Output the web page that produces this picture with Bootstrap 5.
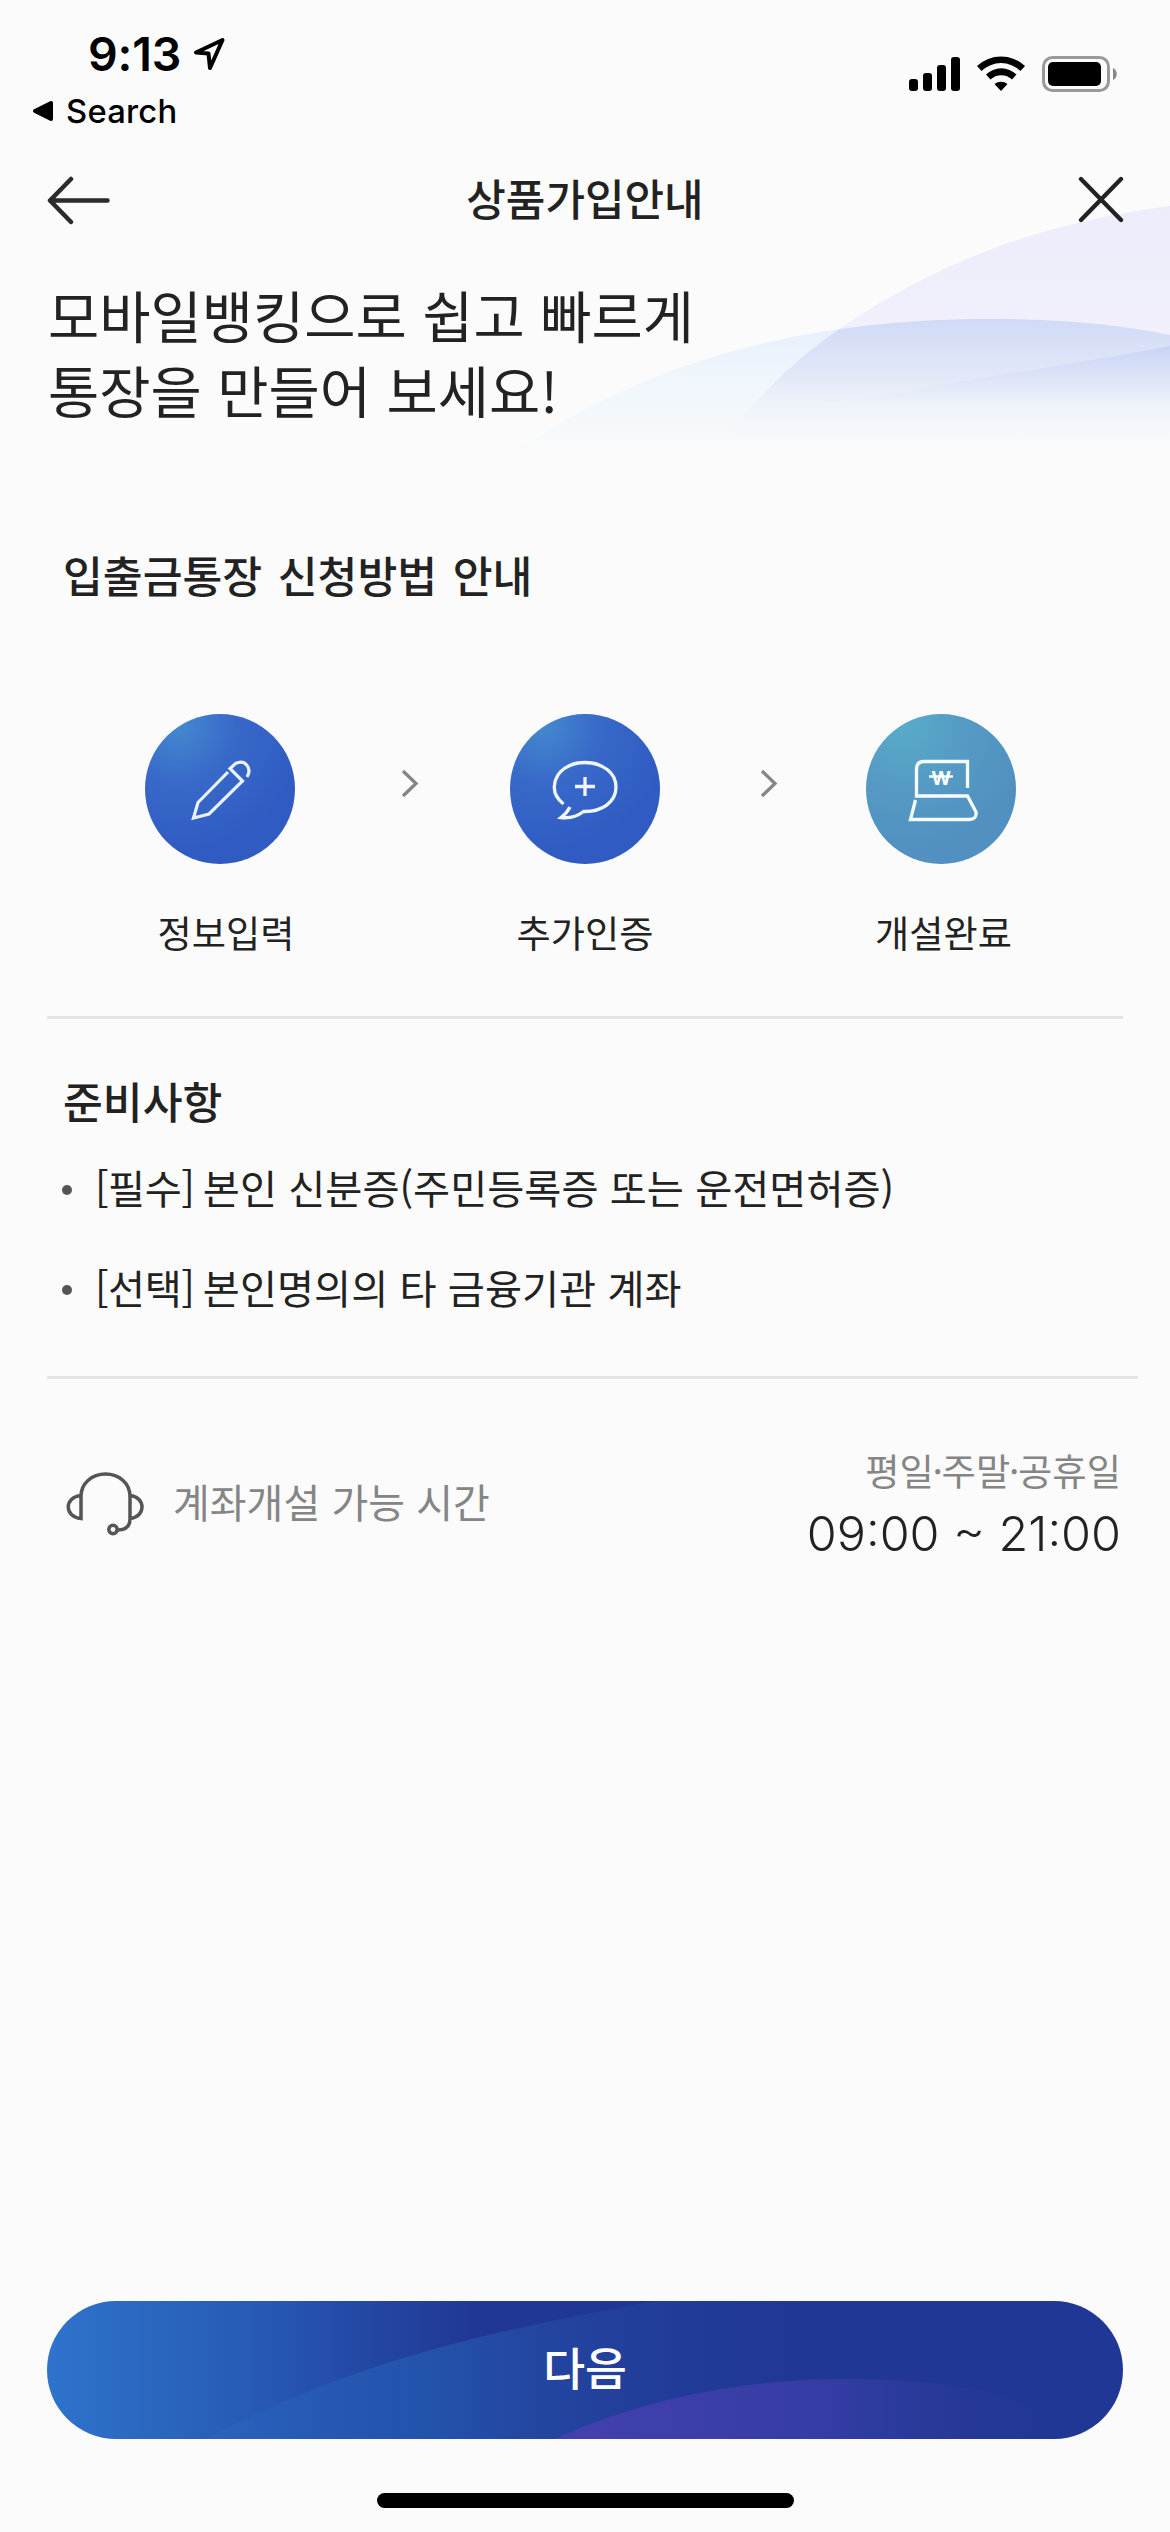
<!DOCTYPE html>
<html lang="ko">
<head>
<meta charset="utf-8">
<meta name="viewport" content="width=device-width, initial-scale=1">
<title>상품가입안내</title>
<link rel="stylesheet" href="https://cdn.jsdelivr.net/npm/bootstrap@5.3.0/dist/css/bootstrap.min.css">
<style>
body{background:#fbfbfb;color:#222;font-family:"Noto Sans CJK KR",sans-serif;}
.screen{width:1170px;height:2532px;overflow:hidden}
.waves{left:0;top:0;z-index:0;pointer-events:none}
.layer{z-index:1}
svg{display:block;flex:none}
.status{height:150px;font-family:Inter,sans-serif;color:#000;padding:30px 53px 0 32px}
.clock{font-size:46.5px;font-weight:600;line-height:48px;padding-left:56px;gap:12px;letter-spacing:-.2px}
.backlink{font-size:32.800px;font-weight:500;line-height:40px;margin-top:13px;gap:12px;letter-spacing:.2px}
.titlebar{height:100px;padding:0 45px 0 46px}
.title-text{font-size:43px;font-weight:500;line-height:60px;margin-bottom:6px;margin-right:19px}
.headline{font-size:55.7px;font-weight:400;line-height:75px;margin:26px 0 0 48px}
.sec-title{font-size:43.3px;font-weight:500;line-height:60px;margin:0 0 0 63px}
.steps{padding-left:145px}
.step{width:150px}
.step-label{font-size:37.2px;line-height:52px;margin-top:42px;white-space:nowrap}
.chev{height:150px;padding-top:56px}
.rule{height:3px;background:#e4e4e4;margin-left:47px}
.needs{font-size:40.3px;line-height:60px;padding-left:62px;gap:40px}
.dot{width:10px;height:10px;border-radius:50%;background:#555;margin:5px 23px 0 0}
.tag{letter-spacing:-.5px;margin-right:.21em}
.hours{padding:0 49px 0 66px}
.muted{color:#858585}
.mid{letter-spacing:-1.300px;margin-left:-1.300px}
.time-text{font-family:Inter,sans-serif;font-weight:300;font-size:48.500px;line-height:56px;color:#222;margin-top:9px}
.next{width:1076px;height:138px;border-radius:69px;background:linear-gradient(90deg,#2f73cd 0,#2a68c0 9%,#2759b4 20%,#2347a3 30%,#213795 40%,#213795 100%);color:#fff;font-size:45.5px;font-weight:500;line-height:64px}
.next svg{left:0;top:0}
.home{width:417px;height:15px;border-radius:8px;background:#000}
</style>
</head>
<body>
<div class="screen position-relative d-flex flex-column">
  <svg class="waves position-absolute" width="1170" height="500" viewBox="0 0 1170 500" aria-hidden="true">
    <defs>
      <linearGradient id="wp" x1="0" y1="200" x2="0" y2="450" gradientUnits="userSpaceOnUse"><stop offset="0" stop-color="#ececfb"/><stop offset=".6" stop-color="#f1f0fb"/><stop offset="1" stop-color="#fbfbfb" stop-opacity="0"/></linearGradient>
      <linearGradient id="wb" x1="0" y1="318" x2="0" y2="470" gradientUnits="userSpaceOnUse"><stop offset="0" stop-color="#e4eefc"/><stop offset=".4" stop-color="#f0f6fc"/><stop offset=".75" stop-color="#f5f9fb"/><stop offset="1" stop-color="#fbfbfb" stop-opacity="0"/></linearGradient>
      <linearGradient id="wo" x1="0" y1="318" x2="0" y2="450" gradientUnits="userSpaceOnUse"><stop offset="0" stop-color="#d0daf7"/><stop offset=".45" stop-color="#e3e8f8"/><stop offset="1" stop-color="#fbfbfb" stop-opacity="0"/></linearGradient>
      <linearGradient id="wd" x1="0" y1="346" x2="0" y2="420" gradientUnits="userSpaceOnUse"><stop offset="0" stop-color="#c3cff4" stop-opacity=".75"/><stop offset=".5" stop-color="#dde4f8" stop-opacity=".6"/><stop offset="1" stop-color="#f3f6fb" stop-opacity="0"/></linearGradient>
      <clipPath id="cp"><path d="M720 450C750 400 800 355 848 323C940 262 1040 223 1170 206V450Z"/></clipPath>
    </defs>
    <path fill="url(#wp)" d="M720 450C750 400 800 355 848 323C940 262 1040 223 1170 206V450Z"/>
    <path fill="url(#wb)" d="M490 470C570 410 720 319 988 319C1060 319 1120 325 1170 335V470Z"/>
    <path clip-path="url(#cp)" fill="url(#wo)" d="M490 470C570 410 720 319 988 319C1060 319 1120 325 1170 335V470Z"/>
    <path fill="url(#wd)" d="M740 430C860 392 1060 368 1170 346V430Z"/>
  </svg>

  <header class="status layer position-relative d-flex justify-content-between">
    <div>
      <div class="clock d-flex align-items-center"><span>9:13</span>
        <svg width="32" height="34" viewBox="0 0 32 34" fill="none" stroke="#000" stroke-width="4" stroke-linejoin="round"><path d="M3 15.5L29.5 3L17 31L15.500 16.500Z"/></svg>
      </div>
      <div class="backlink d-flex align-items-center">
        <svg width="22" height="22" viewBox="0 0 22 22"><path d="M3 11L19 3V19Z" stroke="#000" stroke-width="4" stroke-linejoin="round"/></svg><span>Search</span>
      </div>
    </div>
    <svg class="mt-4" width="208" height="42" viewBox="907 54 208 42">
      <g><rect x="907" y="79" width="9" height="12" rx="3"/><rect x="921" y="73" width="9" height="18" rx="3"/><rect x="935" y="65" width="9" height="26" rx="3"/><rect x="949" y="57" width="9" height="34" rx="3"/></g>
      <path d="M975 66A35 35 0 0 1 1023 66L1018.500 71A28 28 0 0 0 979.500 71ZM984 74.500A22 22 0 0 1 1014.500 74.500L1010 79.500A15.500 15.500 0 0 0 988.500 79.500ZM992.500 84A10.500 10.500 0 0 1 1005.500 84L999 91Z"/>
      <rect x="1041.500" y="57.500" width="65" height="33" rx="9" fill="none" stroke="#999" stroke-width="3"/>
      <rect x="1046" y="62" width="53" height="24" rx="5"/>
      <path d="M1111 68C1116 70 1116 78 1111 80Z" fill="#888"/>
    </svg>
  </header>

  <nav class="titlebar layer position-relative d-flex align-items-center justify-content-between">
    <svg width="66" height="50" viewBox="0 0 66 50" fill="none" stroke="#2b2b2b" stroke-width="4.500" stroke-linecap="round" stroke-linejoin="round"><path d="M25 4L4 25.500L25 47M4 25.500H61.500"/></svg>
    <div class="title-text">상품가입안내</div>
    <svg width="48" height="48" viewBox="0 0 48 48" fill="none" stroke="#222" stroke-width="4.300" stroke-linecap="round"><path d="M4 3L44 44M44 3L4 44"/></svg>
  </nav>

  <main class="layer position-relative">
    <h1 class="headline">모바일뱅킹으로 쉽고 빠르게<br>통장을 만들어 보세요!</h1>
    <h2 class="sec-title" style="margin-top:118px;word-spacing:3.500px">입출금통장 신청방법 안내</h2>

    <section class="steps d-flex" style="margin-top:110px">
      <div class="step d-flex flex-column align-items-center">
        <svg width="150" height="150" viewBox="0 0 150 150" fill="none" stroke="#e8f3ff" stroke-width="3.200">
          <defs><radialGradient id="g1" cx=".22" cy=".08" r=".85"><stop offset="0" stop-color="#4489cf"/><stop offset=".45" stop-color="#3869c9"/><stop offset="1" stop-color="#305bc2"/></radialGradient></defs>
          <circle cx="75" cy="75" r="75" fill="url(#g1)" stroke="none"/>
          <path d="M83 58L53 88.500L48.500 104L64 100L97.500 67L85 54.500L90.500 49.500C100 45 107.500 54 102 63"/>
        </svg>
        <div class="step-label" style="padding-left:12px">정보입력</div>
      </div>
      <div class="chev" style="width:215px;padding-left:106px"><svg width="18" height="28" viewBox="0 0 18 28" fill="none" stroke="#858585" stroke-width="3.300"><path d="M2 1L15 13.500L2 26"/></svg></div>
      <div class="step d-flex flex-column align-items-center">
        <svg width="150" height="150" viewBox="0 0 150 150" fill="none" stroke="#f1f7ff" stroke-width="3.300">
          <circle cx="75" cy="75" r="75" fill="url(#g1)" stroke="none"/>
          <path d="M53.500 90C46 84 43.500 78 44.500 71C46 57 59 48.500 75 48.500C93 48.500 106 59 106 73C106 88 92 98 73.500 97.500C67 102.500 59 104.500 51 103.500C55 100.500 58 97 60 93M75 63V82M65 72.500H85"/>
        </svg>
        <div class="step-label">추가인증</div>
      </div>
      <div class="chev" style="width:205.500px;padding-left:100px"><svg width="18" height="28" viewBox="0 0 18 28" fill="none" stroke="#858585" stroke-width="3.300"><path d="M2 1L15 13.500L2 26"/></svg></div>
      <div class="step d-flex flex-column align-items-center">
        <svg width="150" height="150" viewBox="0 0 150 150" fill="none" stroke="#f6fbff" stroke-width="3.300">
          <defs><radialGradient id="g2" cx=".25" cy=".08" r=".85"><stop offset="0" stop-color="#58abc9"/><stop offset=".5" stop-color="#559ac4"/><stop offset="1" stop-color="#5190c0"/></radialGradient></defs>
          <circle cx="75" cy="75" r="75" fill="url(#g2)" stroke="none"/>
          <path d="M101.500 74V47.500H58Q50.500 47.500 50.500 55.500V82H101.500L110 98Q111 105.500 103 105.500H44.500L49.500 86"/>
          <path d="M63 62.500H87" stroke-width="2.500"/>
          <text x="75" y="71" text-anchor="middle" font-family="Inter, sans-serif" font-size="19" font-weight="700" fill="#fff" stroke="none">W</text>
        </svg>
        <div class="step-label" style="padding-left:6px">개설완료</div>
      </div>
    </section>

    <div class="rule" style="width:1076px;margin-top:58px"></div>
    <h2 class="sec-title" style="margin-top:51px">준비사항</h2>
    <ul class="needs list-unstyled d-flex flex-column" style="margin-top:27px;margin-bottom:0">
      <li class="d-flex align-items-center"><span class="dot"></span><span class="tag">[필수]</span>본인 신분증(주민등록증 또는 운전면허증)</li>
      <li class="d-flex align-items-center"><span class="dot"></span><span class="tag">[선택]</span>본인명의의 타 금융기관 계좌</li>
    </ul>
    <div class="rule" style="width:1091px;margin-top:59px"></div>

    <section class="hours d-flex justify-content-between align-items-start" style="margin-top:64px">
      <div class="d-flex align-items-center muted" style="font-size:40px;line-height:60px;margin-top:27px">
        <svg width="80" height="66" viewBox="0 0 80 66" fill="none" stroke="#555" stroke-width="3.500"><path d="M15 26.500C15 13 26 4 39.500 4S64 13 64 26.500V49C64 56 60 60 51.500 60M15 25.500C-2 27 -2 47 15 48.500ZM64 25.500C80 27 80 47 64 48.500"/><circle cx="47" cy="59.500" r="4.200"/></svg>
        <span style="margin-left:27px;margin-top:-4px">계좌개설 가능 시간</span>
      </div>
      <div class="text-end">
        <div class="muted" style="font-size:37.300px;line-height:54px">평일<span class="mid">·</span>주말<span class="mid">·</span>공휴일</div>
        <div class="time-text">09:00 ~ 21:00</div>
      </div>
    </section>
  </main>

  <footer class="layer position-relative mt-auto d-flex flex-column align-items-center" style="padding-bottom:24px">
    <button type="button" class="next btn border-0 p-0 position-relative overflow-hidden d-flex align-items-center justify-content-center">
      <svg class="position-absolute" width="1076" height="138" viewBox="0 0 1076 138">
        <defs>
          <linearGradient id="b1" x1="170" y1="0" x2="800" y2="0" gradientUnits="userSpaceOnUse"><stop offset="0" stop-color="#2a67c2" stop-opacity=".4"/><stop offset=".35" stop-color="#2456ae" stop-opacity=".85"/><stop offset="1" stop-color="#213795" stop-opacity="0"/></linearGradient>
          <linearGradient id="b2" x1="510" y1="0" x2="1040" y2="0" gradientUnits="userSpaceOnUse"><stop offset="0" stop-color="#4340ae"/><stop offset=".5" stop-color="#353da4"/><stop offset="1" stop-color="#213795" stop-opacity="0"/></linearGradient>
        </defs>
        <path fill="url(#b1)" d="M158 138C300 65 420 32 640 -5H850V138Z"/>
        <path fill="url(#b2)" d="M508 138C585 102 690 78 796 78C890 78 960 88 1030 125V138Z"/>
      </svg>
      <span class="position-relative mb-2">다음</span>
    </button>
    <div class="home" style="margin-top:54px"></div>
  </footer>
</div>
<script src="https://cdn.jsdelivr.net/npm/bootstrap@5.3.0/dist/js/bootstrap.bundle.min.js"></script>
</body>
</html>
